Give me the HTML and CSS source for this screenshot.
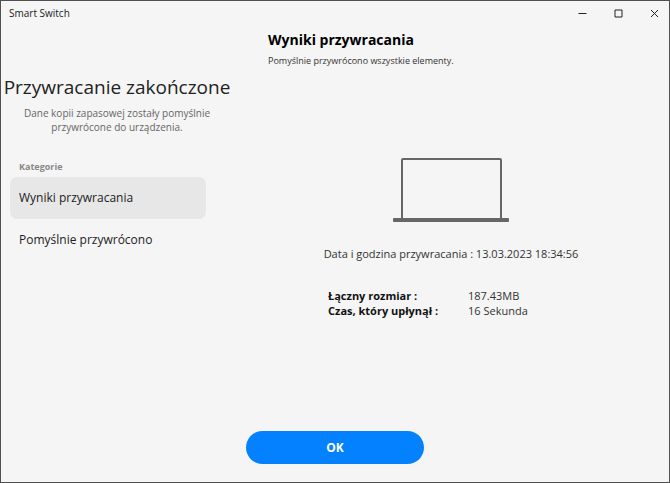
FILE: index.html
```html
<!DOCTYPE html>
<html lang="pl">
<head>
  <meta charset="UTF-8" />
  <meta name="viewport" content="width=device-width, initial-scale=1" />
  <title>Smart Switch</title>
  <link rel="stylesheet" href="styles.css">
</head>
<body>
  <div class="window">
    <header class="titlebar">
      <span class="app-name">Smart Switch</span>
      <div class="window-controls">
        <button type="button" aria-label="Minimalizuj">
          <svg width="9" height="9" viewBox="0 0 9 9"><path d="M0.500 4.500H8.500" /></svg>
        </button>
        <button type="button" aria-label="Maksymalizuj">
          <svg width="9" height="9" viewBox="0 0 9 9"><path d="M1 1H8V8H1Z" /></svg>
        </button>
        <button type="button" aria-label="Zamknij">
          <svg width="9" height="9" viewBox="0 0 9 9"><path d="M1 1L8 8M8 1L1 8" /></svg>
        </button>
      </div>
    </header>

    <div class="content">
      <aside class="sidebar">
        <h1>Przywracanie zakończone</h1>
        <p class="summary">Dane kopii zapasowej zostały pomyślnie przywrócone do urządzenia.</p>
        <h2>Kategorie</h2>
        <nav class="categories">
          <a class="active" href="#wyniki" aria-current="page">Wyniki przywracania</a>
          <a href="#przywrocono">Pomyślnie przywrócono</a>
        </nav>
      </aside>

      <main class="results" id="wyniki">
        <h2>Wyniki przywracania</h2>
        <p class="message">Pomyślnie przywrócono wszystkie elementy.</p>
        <svg class="laptop" width="116" height="66" viewBox="0 0 116 66" aria-hidden="true">
          <path d="M9 61V3Q9 2 10 2H107Q108 2 108 3V61" fill="none" stroke="#666" stroke-width="2" />
          <rect x="0" y="61" width="116" height="4" rx="1" fill="#666" />
        </svg>
        <p class="date">Data i godzina przywracania : 13.03.2023 18:34:56</p>
        <dl class="details">
          <dt>Łączny rozmiar :</dt>
          <dd>187.43MB</dd>
          <dt>Czas, który upłynął :</dt>
          <dd>16 Sekunda</dd>
        </dl>
      </main>
    </div>

    <footer class="footer">
      <button class="ok" type="button">OK</button>
    </footer>
  </div>
</body>
</html>
```

FILE: styles.css
```css
* {
  box-sizing: border-box;
}
body, h1, h2, p, dl, dd {
  margin: 0;
}
body {
  font-family: "Open Sans", "Noto Sans", sans-serif;
  font-size: 11px;
  color: #333;
  background: #f5f5f5;
}
button {
  font-family: inherit;
  border: none;
  cursor: pointer;
}
.window {
  min-height: 100vh;
  display: flex;
  flex-direction: column;
  border: 1px solid #505050;
}

/* Title bar */
.titlebar {
  display: flex;
  justify-content: space-between;
  align-items: center;
  height: 24px;
  padding-left: 8px;
}
.app-name {
  font-size: 10px;
  color: #222;
}
.window-controls {
  display: flex;
  gap: 6px;
}
.window-controls button {
  display: flex;
  align-items: center;
  justify-content: center;
  width: 30px;
  height: 24px;
  padding: 0;
  background: none;
}
.window-controls svg {
  fill: none;
  stroke: #222;
}

.content {
  flex: 1;
  display: grid;
  grid-template-columns: 232px 1fr;
}

/* Left side */
.sidebar {
  padding-top: 48px;
}
.sidebar h1 {
  font-size: 19px;
  font-weight: 400;
  line-height: 28px;
  text-align: center;
  white-space: nowrap;
  color: #222;
}
.summary {
  padding: 5px 20px 0;
  font-size: 10px;
  line-height: 14px;
  text-align: center;
  color: #666;
}
.sidebar h2 {
  margin-top: 26px;
  padding-left: 18px;
  font-size: 9px;
  line-height: 14px;
  color: #888;
}
.categories {
  display: flex;
  flex-direction: column;
  margin: 3px 27px 0 9px;
}
.categories a {
  padding: 0 9px;
  font-size: 12px;
  line-height: 42px;
  color: #222;
  text-decoration: none;
  border-radius: 7px;
}
.categories .active {
  background: #e7e7e7;
}

/* Right side */
.results {
  display: flex;
  flex-direction: column;
  align-items: center;
  padding-top: 5px;
}
.results h2 {
  align-self: stretch;
  padding-left: 35px;
  font-size: 14px;
  line-height: 20px;
  color: #000;
}
.message {
  align-self: stretch;
  padding-left: 35px;
  margin-top: 4px;
  font-size: 9px;
  line-height: 14px;
}
.laptop {
  margin-top: 89px;
}
.date {
  margin-top: 23px;
  line-height: 15px;
}
.details {
  display: grid;
  grid-template-columns: 140px 106px;
  margin-top: 27px;
  line-height: 15px;
}
.details dt {
  font-weight: 700;
  color: #111;
}

.footer {
  display: flex;
  justify-content: center;
  padding-bottom: 18px;
}
.ok {
  width: 178px;
  height: 33px;
  font-size: 12px;
  font-weight: 700;
  color: #fff;
  background: #0381fe;
  border-radius: 17px;
}
```
